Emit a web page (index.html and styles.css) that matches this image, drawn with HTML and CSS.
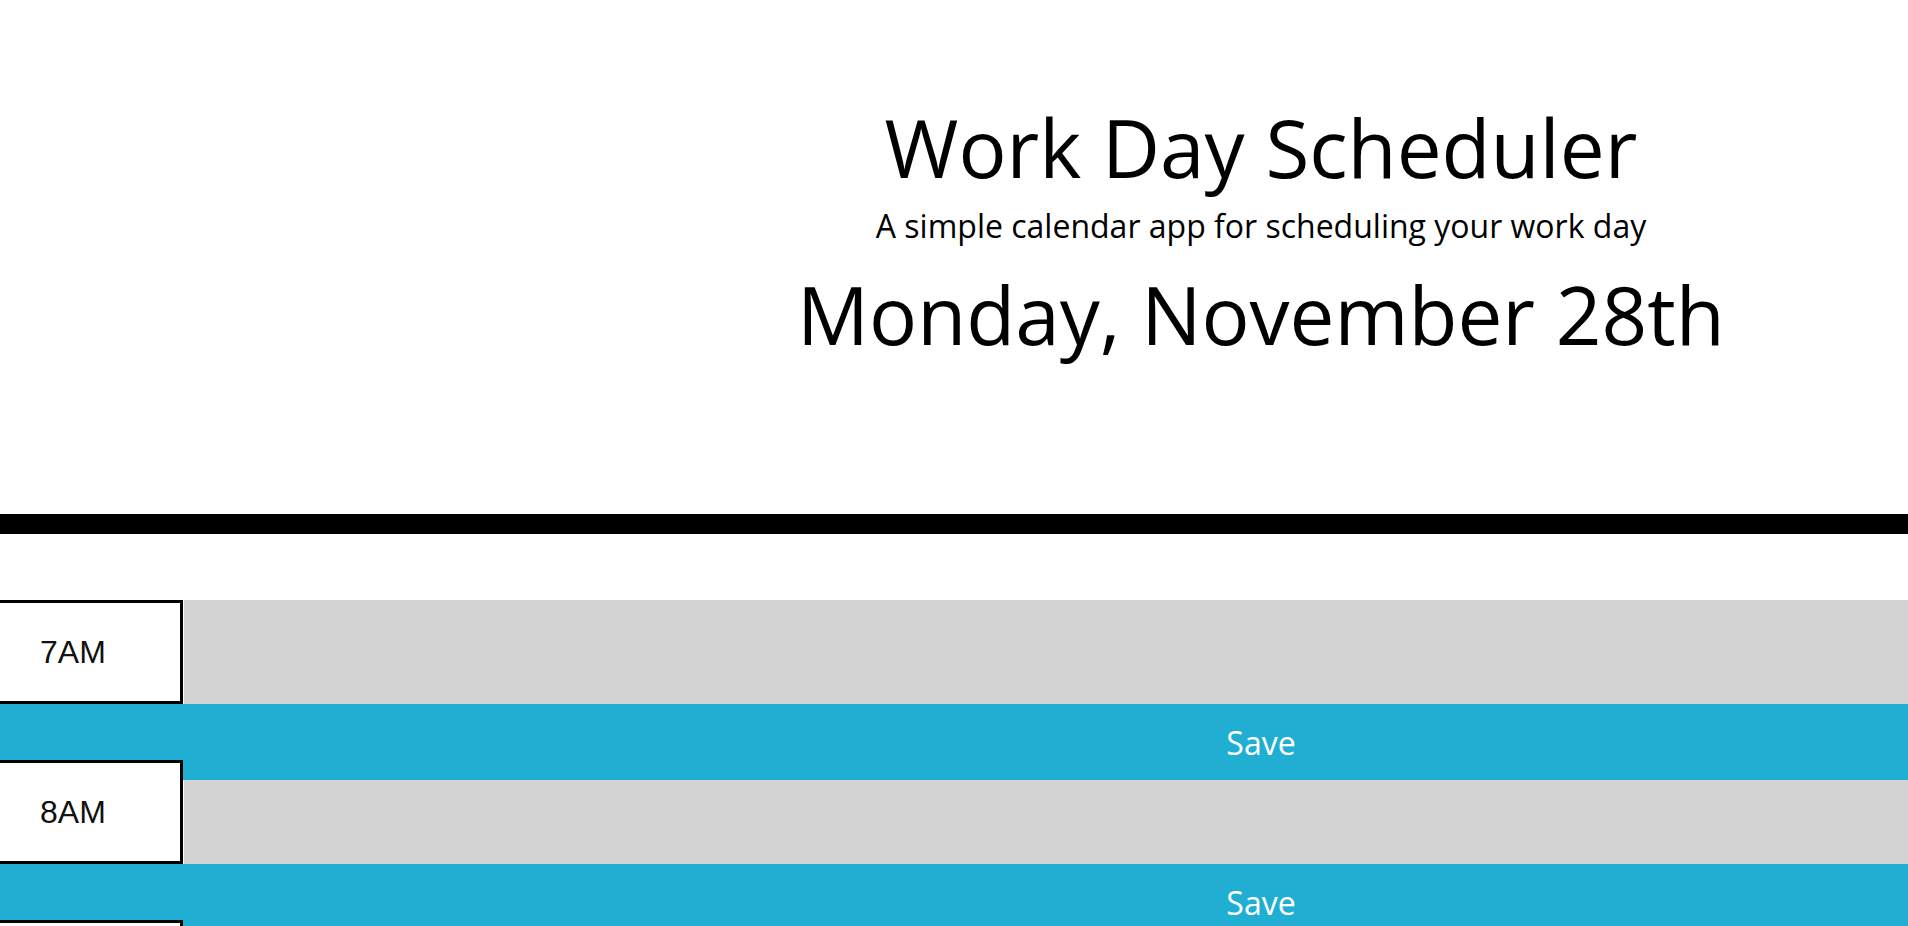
FILE: index.html
```html
<!DOCTYPE html>
<html lang="en">
<head>
<meta charset="UTF-8">
<title>Work Day Scheduler</title>
<link rel="stylesheet" href="styles.css">
</head>
<body>
<header class="jumbotron">
  <h1 class="title">Work Day Scheduler</h1>
  <p class="lead">A simple calendar app for scheduling your work day</p>
  <p class="current-day">Monday, November 28th</p>
</header>
<main class="container">
  <section class="time-block">
    <div class="hour">7AM</div>
    <textarea class="description"></textarea>
    <button class="save-btn">Save</button>
  </section>
  <section class="time-block">
    <div class="hour">8AM</div>
    <textarea class="description"></textarea>
    <button class="save-btn">Save</button>
  </section>
  <section class="time-block">
    <div class="hour">9AM</div>
    <textarea class="description"></textarea>
    <button class="save-btn">Save</button>
  </section>
  <section class="time-block">
    <div class="hour">10AM</div>
    <textarea class="description"></textarea>
    <button class="save-btn">Save</button>
  </section>
  <section class="time-block">
    <div class="hour">11AM</div>
    <textarea class="description"></textarea>
    <button class="save-btn">Save</button>
  </section>
  <section class="time-block">
    <div class="hour">12PM</div>
    <textarea class="description"></textarea>
    <button class="save-btn">Save</button>
  </section>
</main>
</body>
</html>
```
FILE: styles.css
```css
html, body {
  margin: 0;
  padding: 0;
  background: #ffffff;
}

body {
  font-family: "Open Sans", "Liberation Sans", sans-serif;
  color: #000000;
  overflow: hidden;
}

.jumbotron {
  padding: 99px 0 152px 614px;
  text-align: center;
  border-bottom: 20px solid #000000;
}

.title {
  margin: 0;
  font-size: 80px;
  font-weight: 400;
  line-height: 96px;
}

.lead {
  margin: 12px 0 0;
  font-size: 32px;
  line-height: 38px;
}

.current-day {
  margin: 21px 0 0;
  font-size: 80px;
  line-height: 96px;
}

.container {
  margin-top: 66px;
}

.time-block {
  display: flex;
  flex-wrap: wrap;
}

.hour {
  position: relative;
  z-index: 2;
  box-sizing: border-box;
  flex: 0 0 183px;
  height: 104px;
  padding-left: 40px;
  display: flex;
  align-items: center;
  background: #ffffff;
  border-top: 3px solid #000000;
  border-bottom: 3px solid #000000;
  border-right: 3px solid #000000;
  font-family: "Liberation Sans", Arial, sans-serif;
  font-size: 32px;
  color: #111111;
}

.description {
  flex: 1 1 auto;
  height: 104px;
  margin: 0 0 0 1px;
  padding: 0;
  border: 0;
  background: #d3d3d3;
  resize: none;
  box-sizing: border-box;
}

.save-btn {
  position: relative;
  z-index: 1;
  flex: 0 0 100%;
  box-sizing: border-box;
  height: 76px;
  margin-bottom: -20px;
  padding: 0 0 0 614px;
  border: 0;
  background: #20afd3;
  color: #ffffff;
  font-family: "Open Sans", "Liberation Sans", sans-serif;
  font-size: 32px;
  text-align: center;
}
```
